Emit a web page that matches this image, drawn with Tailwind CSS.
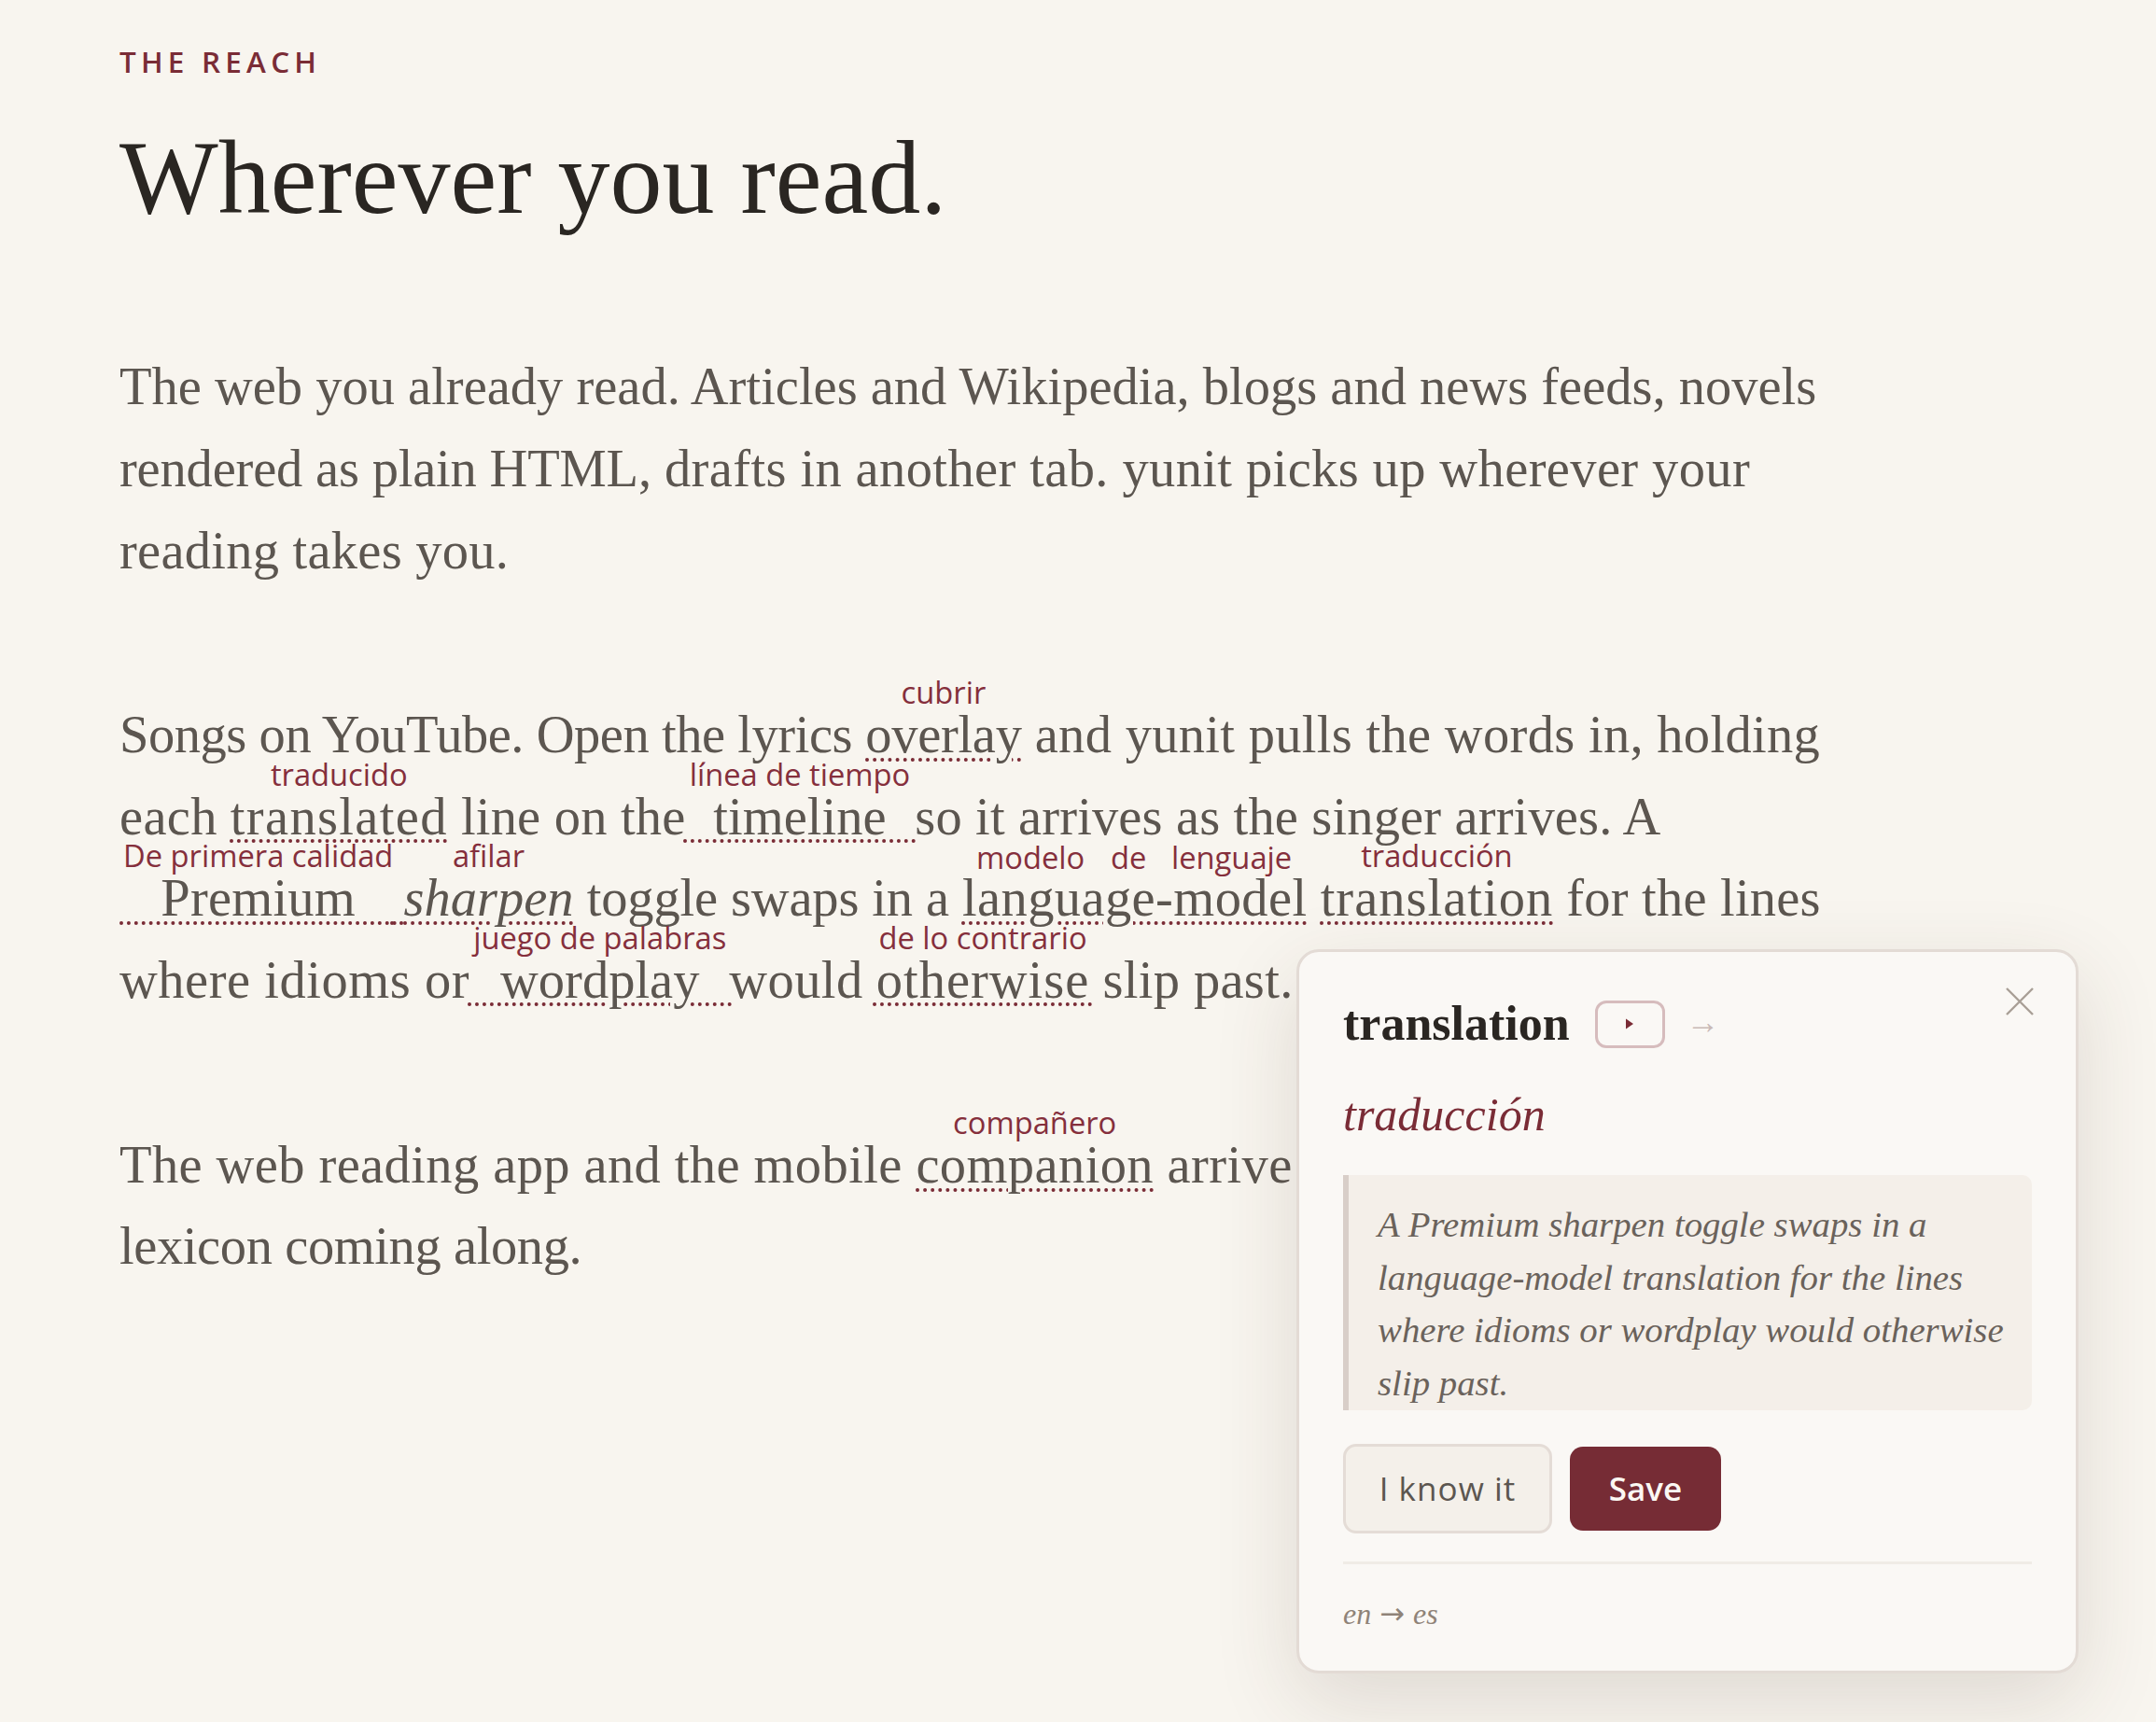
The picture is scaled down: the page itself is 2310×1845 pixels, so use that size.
<!DOCTYPE html>
<html><head><meta charset="utf-8"><script src="https://cdn.jsdelivr.net/npm/@tailwindcss/browser@4"></script></head>
<body class="bg-[#f8f5ef] w-[2310px] h-[1845px] overflow-hidden relative font-['Liberation_Serif',serif]">
<main class="pl-[128px] pt-[48px] w-[2100px]">
<div class="text-[31.5px] leading-[36px] tracking-[0.165em] text-[#7a2c36] font-['Open_Sans',sans-serif] font-semibold">THE REACH</div>
<h1 class="text-[112px] leading-[120px] text-[#2a2622] mt-[46px]">Wherever you read.</h1>
<p class="text-[56.5px] leading-[88px] text-[#5c5650] mt-[120px] whitespace-nowrap">The web you already read. Articles and Wikipedia, blogs and news feeds, novels<br><span class="tracking-[-0.19px]">rendered as plain HTML,</span> <span class="tracking-[0.38px]">drafts in another tab. yunit picks up wherever your</span><br><span class="tracking-[0.25px]">reading takes you.</span></p>
<div class="text-[56.5px] leading-[86px] text-[#5c5650] mt-[94px] whitespace-nowrap">
<div class="h-[87.5px]"><span class="tracking-[-0.45px]">Songs on YouTube. Open the lyrics</span> <ruby class="tracking-[-0.3px] underline decoration-dotted decoration-[#7a2c36] decoration-[4px] underline-offset-[6px]">overlay<rt class="tracking-normal text-[32.7px] leading-[7px] font-medium text-[#852f3c] font-['Open_Sans',sans-serif] px-[6px]">cubrir</rt></ruby> <span class="tracking-[0.3px]">and yunit pulls the words in, holding</span></div>
<div class="h-[87.5px]"><span class="tracking-[0.3px]">each</span> <ruby class="tracking-[1.33px] underline decoration-dotted decoration-[#7a2c36] decoration-[4px] underline-offset-[6px]">translated<rt class="tracking-normal text-[32.7px] leading-[7px] font-medium text-[#852f3c] font-['Open_Sans',sans-serif] px-[6px]">traducido</rt></ruby> <span class="tracking-[0.2px]">line on the</span> <ruby class="-ml-[9px] -mr-[8px] underline decoration-dotted decoration-[#7a2c36] decoration-[4px] underline-offset-[6px]">timeline<rt class="tracking-normal text-[32.7px] leading-[7px] font-medium text-[#852f3c] font-['Open_Sans',sans-serif] px-[6px]">línea de tiempo</rt></ruby> <span class="tracking-[0.14px]">so it arrives as the singer arrives. A</span></div>
<div class="h-[87.5px]"><span class="tracking-[0.2px]"><span class="underline decoration-dotted decoration-[#7a2c36] decoration-[4px] underline-offset-[6px]"><ruby>Premium<rt class="tracking-normal text-[32.7px] leading-[7px] font-medium text-[#852f3c] font-['Open_Sans',sans-serif] px-[4px]">De primera calidad</rt></ruby> <ruby class="italic tracking-normal">sharpen<rt class="tracking-normal not-italic text-[32.7px] leading-[7px] font-medium text-[#852f3c] font-['Open_Sans',sans-serif] px-[6px]">afilar</rt></ruby></span></span> <span class="tracking-[-0.15px]">toggle swaps in a</span> <span class="relative tracking-[0.4px] underline decoration-dotted decoration-[#7a2c36] decoration-[4px] underline-offset-[6px]">language-model<span class="absolute tracking-normal left-[15px] -top-[32px] text-[32.7px] leading-[40px] font-medium text-[#852f3c] font-['Open_Sans',sans-serif]">modelo</span><span class="absolute tracking-normal left-[159px] -top-[32px] text-[32.7px] leading-[40px] font-medium text-[#852f3c] font-['Open_Sans',sans-serif]">de</span><span class="absolute tracking-normal left-[224px] -top-[32px] text-[32.7px] leading-[40px] font-medium text-[#852f3c] font-['Open_Sans',sans-serif]">lenguaje</span></span> <ruby class="tracking-[1px] underline decoration-dotted decoration-[#7a2c36] decoration-[4px] underline-offset-[6px]">translation<rt class="tracking-normal text-[32.7px] leading-[7px] font-medium text-[#852f3c] font-['Open_Sans',sans-serif] px-[6px]">traducción</rt></ruby> <span class="tracking-[0.2px]">for the lines</span></div>
<div class="h-[87.5px]"><span class="tracking-[0.53px]">where idioms or</span> <ruby class="-ml-[9px] -mr-[10px] underline decoration-dotted decoration-[#7a2c36] decoration-[4px] underline-offset-[6px]">wordplay<rt class="tracking-normal text-[32.7px] leading-[7px] font-medium text-[#852f3c] font-['Open_Sans',sans-serif] px-[6px]">juego de palabras</rt></ruby> <span class="tracking-[0.4px]">would</span> <ruby class="tracking-[1px] underline decoration-dotted decoration-[#7a2c36] decoration-[4px] underline-offset-[6px]">otherwise<rt class="tracking-normal text-[32.7px] leading-[7px] font-medium text-[#852f3c] font-['Open_Sans',sans-serif] px-[6px]">de lo contrario</rt></ruby> <span class="tracking-[0.33px]">slip past.</span></div>
</div>
<div class="text-[56.5px] leading-[86px] text-[#5c5650] mt-[111px] whitespace-nowrap">
<div class="h-[88px]"><span class="tracking-[0.4px]">The web reading app and the mobile <ruby class="underline decoration-dotted decoration-[#7a2c36] decoration-[4px] underline-offset-[6px]">companion<rt class="tracking-normal text-[32.7px] leading-[7px] font-medium text-[#852f3c] font-['Open_Sans',sans-serif] px-[6px]">compañero</rt></ruby> arrive</span></div>
<div class="h-[88px] pt-[15px]"><span class="tracking-[-0.4px]">lexicon coming along.</span></div>
</div>
</main>
<aside class="absolute left-[1389px] top-[1017px] w-[838px] h-[776px] bg-[#faf8f5] border-[3px] border-[#e3dbd5] rounded-[24px] shadow-[0_30px_90px_rgba(70,50,35,0.14)] pl-[47px] pr-[47px] pt-[44px]">
<svg class="absolute right-[44px] top-[37px]" width="32" height="32" viewBox="0 0 32 32"><path d="M2 2 L30 30 M30 2 L2 30" stroke="#a89f96" stroke-width="2.4" fill="none"/></svg>
<div class="flex items-center h-[66px]">
<span class="text-[52px] leading-[66px] font-bold text-[#2a2622]">translation</span>
<span class="ml-[27px] w-[75px] h-[51px] border-[3px] border-[#d6bcbd] rounded-[12px] flex items-center justify-center"><svg width="12" height="12" viewBox="0 0 12 12"><path d="M2 0.5 L10 6 L2 11.5 Z" fill="#7a2c36"/></svg></span>
<span class="ml-[23px] mb-[4px] text-[36px] leading-[40px] text-[#c9bab6]">→</span>
</div>
<div class="italic text-[50px] leading-[56px] text-[#7a2c36] mt-[36px]">traducción</div>
<blockquote class="mt-[37px] h-[252px] border-l-[6px] border-[#d8cec8] bg-[#f4efe9] rounded-r-[10px] pl-[31px] pr-[10px] pt-[25px] italic text-[38.8px] leading-[56.5px] text-[#6a625b]">A Premium sharpen toggle swaps in a language-model translation for the lines where idioms or wordplay would otherwise slip past.</blockquote>
<div class="flex items-center gap-[19px] mt-[36px]">
<button class="w-[224px] h-[96px] bg-[#f4f0ea] border-[3px] border-[#e4dcd6] rounded-[14px] text-[35px] font-medium tracking-[0.03em] text-[#5c5650] font-['Open_Sans',sans-serif]">I know it</button>
<button class="w-[162px] h-[90px] bg-[#762c35] rounded-[14px] text-[35px] font-semibold text-[#fbf8f3] font-['Open_Sans',sans-serif]">Save</button>
</div>
<div class="mt-[30px] border-t-[3px] border-[#f0ece6] pt-[33px] italic text-[32px] leading-[40px] text-[#8f8378]">en <span class="not-italic font-['DejaVu_Sans',sans-serif] text-[32px] mx-[1px]">→</span> es</div>
</aside>
</body></html>
